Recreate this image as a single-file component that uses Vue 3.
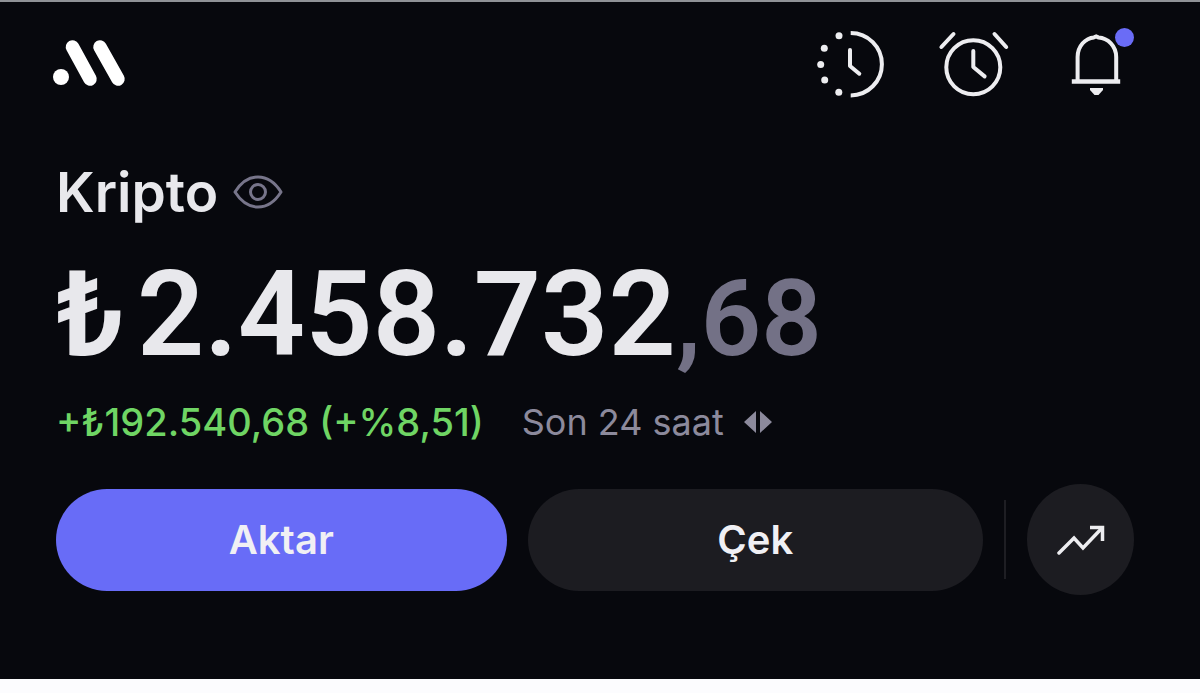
<template>
  <div class="wallet">
    <header class="topbar">
      <a href="#" class="logo" aria-label="Ana sayfa">
        <svg width="76" height="56" viewBox="0 0 76 56" fill="none">
          <circle cx="9" cy="41" r="8" fill="#fff" />
          <path d="M20.5 11 38 43M48 11 66 43" stroke="#fff" stroke-width="13.5" stroke-linecap="round" />
        </svg>
      </a>
      <div class="actions">
        <button class="icon-button" type="button" aria-label="Geçmiş">
          <svg width="72" height="72" viewBox="0 0 72 72" fill="none" stroke="#ededf0" stroke-width="4">
            <path d="M36.7 5a31.2 31.2 0 0 1 0 62.4" />
            <path d="M36 22v16l9.3 7.7" stroke-linecap="round" stroke-linejoin="round" />
            <circle
              v-for="(dot, index) in historyDots"
              :key="index"
              :cx="dot[0]"
              :cy="dot[1]"
              r="3.5"
              fill="#ededf0"
              stroke="none"
            />
          </svg>
        </button>
        <button class="icon-button" type="button" aria-label="Alarm">
          <svg width="72" height="72" viewBox="0 0 72 72" fill="none" stroke="#ededf0" stroke-width="4" stroke-linecap="round" stroke-linejoin="round">
            <circle cx="35.3" cy="39.3" r="27" />
            <path d="M15.5 6 3.4 19M56.5 6 68.2 19M35.3 23v16L46.6 48.4" />
          </svg>
        </button>
        <button class="icon-button" type="button" aria-label="Bildirimler">
          <svg width="72" height="72" viewBox="0 0 72 72" fill="none" stroke="#ededf0" stroke-width="4">
            <path d="M15.6 53V29c0-11 8-19 16.4-19.6l2.2-.9 2.2.9C46 10 54.2 18 54.2 29v24" />
            <path d="M9.8 53.6h48.4" stroke-width="4.5" />
            <path d="M28 60h13v2l-4.5 5h-4L28 62z" fill="#ededf0" stroke="none" />
          </svg>
          <span class="badge"></span>
        </button>
      </div>
    </header>

    <main class="content">
      <div class="title-row">
        <h1 class="title">Kripto</h1>
        <button class="eye" type="button" aria-label="Bakiyeyi gizle">
          <svg width="50" height="34" viewBox="0 0 50 34" fill="none" stroke="#77758a" stroke-width="3" stroke-linejoin="round">
            <path d="M2 17C8 7.5 16 2 25 2s17 5.5 23 15c-6 9.5-14 15-23 15S8 26.5 2 17Z" />
            <circle cx="25" cy="17" r="7.5" />
          </svg>
        </button>
      </div>

      <div class="balance">
        <span class="currency">₺</span>
        <span class="whole">{{ balance.whole }}</span>
        <span class="fraction">{{ balance.fraction }}</span>
      </div>

      <div class="change-row">
        <span class="change">{{ change }}</span>
        <button class="period" type="button">
          <span>Son 24 saat</span>
          <svg width="28" height="22" viewBox="0 0 28 22" fill="#8c8a9c">
            <path d="M12 0v22L0 11zM16 0v22l12-11z" />
          </svg>
        </button>
      </div>

      <div class="button-row">
        <button class="pill primary" type="button">Aktar</button>
        <button class="pill secondary" type="button">Çek</button>
        <span class="divider"></span>
        <button class="chart" type="button" aria-label="Grafik">
          <svg width="48" height="32" viewBox="0 0 48 32" fill="none" stroke="#ededf0" stroke-width="3.5">
            <path d="M2 29 17 14l9 10L45 4" stroke-linecap="round" />
            <path d="M33 3.5h12.5V17" />
          </svg>
        </button>
      </div>
    </main>
  </div>
</template>

<script setup>
import { ref } from 'vue'

const balance = ref({ whole: '2.458.732', fraction: ',68' })
const change = ref('+₺192.540,68 (+%8,51)')

// dotted left half of the history icon
const historyDots = [
  [25, 7.7],
  [10.3, 20.3],
  [6.7, 36.5],
  [10.7, 52],
  [24.8, 64.3]
]
</script>

<style>
body {
  background: #fcfcfe;
}
</style>

<style scoped>
.wallet {
  box-sizing: border-box;
  border-top: 2px solid #8f9296;
  padding-bottom: 84px;
  background: #07080d;
  color: #e8e8ec;
  font-family: Inter, "Liberation Sans", sans-serif;
}

button {
  margin: 0;
  padding: 0;
  border: none;
  background: none;
  color: inherit;
  font-family: inherit;
  cursor: pointer;
}

svg {
  display: block;
}

.topbar {
  display: flex;
  align-items: center;
  justify-content: space-between;
  padding: 26px 66px 0 52px;
}

.actions {
  display: flex;
  gap: 52px;
}

.icon-button {
  position: relative;
}

.badge {
  position: absolute;
  top: 0;
  right: 0;
  width: 19px;
  height: 19px;
  border-radius: 50%;
  background: #6a6cf6;
}

.content {
  padding: 58px 66px 0 56px;
}

.title-row {
  display: flex;
  align-items: center;
  gap: 15px;
}

.title {
  margin: 0;
  font-size: 55px;
  line-height: 68px;
  font-weight: 600;
}

.balance {
  display: flex;
  align-items: baseline;
  margin-top: 19px;
  font-family: Roboto, Inter, sans-serif;
  font-size: 118px;
  line-height: 140px;
  font-weight: 600;
}

.currency {
  margin-right: 12px;
}

.fraction {
  color: #737186;
  font-size: 106px;
}

.change-row {
  display: flex;
  align-items: center;
  gap: 38px;
  margin-top: 9px;
  line-height: 48px;
}

.change {
  color: #6fd564;
  font-size: 38px;
  font-weight: 500;
}

.period {
  display: flex;
  align-items: center;
  gap: 20px;
  color: #8c8a9c;
  font-size: 36px;
  line-height: 48px;
}

.button-row {
  display: flex;
  align-items: center;
  gap: 21px;
  margin-top: 38px;
}

.pill {
  height: 102px;
  border-radius: 51px;
  background: #1c1c21;
  color: #f0f0f4;
  font-size: 40px;
  font-weight: 600;
}

.primary {
  flex: 90;
  background: #686cf7;
}

.secondary {
  flex: 91;
}

.divider {
  width: 2px;
  height: 79px;
  background: #1e1e23;
}

.chart {
  display: flex;
  align-items: center;
  justify-content: center;
  width: 107px;
  height: 111px;
  border-radius: 50%;
  background: #1c1c21;
}
</style>
